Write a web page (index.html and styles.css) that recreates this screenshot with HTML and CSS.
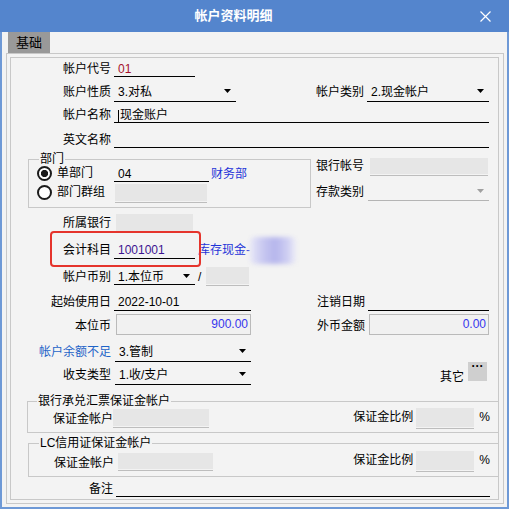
FILE: index.html
```html
<!DOCTYPE html>
<html lang="zh-CN">
<head>
<meta charset="UTF-8">
<title>帐户资料明细</title>
<link rel="stylesheet" href="styles.css">
</head>
<body>

<div class="window">
    <div class="titlebar">
        <div class="title">帐户资料明细</div>
        <div class="close">
            <svg width="11" height="11" viewBox="0 0 11 11"><path d="M0.5 0.5L10.5 10.5M10.5 0.5L0.5 10.5" stroke="#fff" stroke-width="1.2" fill="none"/></svg>
        </div>
    </div>

    <div class="client">
        <div class="tabs"><div class="tab">基础</div></div>

        <div class="panel">
            <div class="frame">

                <div class="row h19">
                    <div class="lbl">帐户代号</div>
                    <div class="fld w81 code">01</div>
                </div>

                <div class="row h25 rp2">
                    <div class="lbl">账户性质</div>
                    <div class="fld w122">3.对私<svg class="arr" width="7" height="4" viewBox="0 0 7 4"><path d="M0 0H7L3.5 4Z"/></svg></div>
                    <div class="lbl w128">帐户类别</div>
                    <div class="fld w122">2.现金帐户<svg class="arr" width="7" height="4" viewBox="0 0 7 4"><path d="M0 0H7L3.5 4Z"/></svg></div>
                </div>

                <div class="row h21">
                    <div class="lbl">帐户名称</div>
                    <div class="fld w375"><span class="caret"></span>现金账户</div>
                </div>

                <div class="row h25">
                    <div class="lbl">英文名称</div>
                    <div class="fld w375"></div>
                </div>

                <div class="dept">
                    <fieldset class="grp g-dept">
                        <legend>部门</legend>
                        <div class="row h16">
                            <div class="opt"><span class="radio on"></span>单部门</div>
                            <div class="fld w95">04</div>
                            <div class="txt link ml2">财务部</div>
                        </div>
                        <div class="row h19">
                            <div class="opt"><span class="radio"></span>部门群组</div>
                            <div class="box gray w92 h17 ml4"></div>
                        </div>
                    </fieldset>
                    <div class="side">
                        <div class="row h16">
                            <div class="lbl w53">银行帐号</div>
                            <div class="box gray w118 h16 ml6"></div>
                        </div>
                        <div class="row h27 rp1">
                            <div class="lbl w53">存款类别</div>
                            <div class="fld dis w121 ml4"><svg class="arr" width="7" height="4" viewBox="0 0 7 4"><path d="M0 0H7L3.5 4Z"/></svg></div>
                        </div>
                    </div>
                </div>

                <div class="row h23">
                    <div class="lbl">所属银行</div>
                    <div class="box flat w77 h17 ml5"></div>
                </div>

                <div class="row h28 rp1">
                    <div class="lbl">会计科目</div>
                    <div class="fld w81 subject">1001001</div>
                    <div class="txt link ml3">库存现金-</div>
                    <div class="smudge"></div>
                </div>

                <div class="row h26">
                    <div class="lbl">帐户币别</div>
                    <div class="fld w81">1.本位币<svg class="arr" width="7" height="4" viewBox="0 0 7 4"><path d="M0 0H7L3.5 4Z"/></svg></div>
                    <div class="txt ml3">/</div>
                    <div class="box gray w43 h17 ml5 mb1"></div>
                </div>

                <div class="row h26 rp1">
                    <div class="lbl">起始使用日</div>
                    <div class="fld w137">2022-10-01</div>
                    <div class="lbl w114">注销日期</div>
                    <div class="fld w121"></div>
                </div>

                <div class="row h24 rp1">
                    <div class="lbl">本位币</div>
                    <div class="box num w135 h21 ml5">900.00</div>
                    <div class="lbl w114">外币金额</div>
                    <div class="box num w120 h21 ml4">0.00</div>
                </div>

                <div class="row h27 rp2">
                    <div class="lbl warn">帐户余额不足</div>
                    <div class="fld w136 ml4">3.管制<svg class="arr" width="7" height="4" viewBox="0 0 7 4"><path d="M0 0H7L3.5 4Z"/></svg></div>
                </div>

                <div class="row h23 rp2 pr11">
                    <div class="lbl">收支类型</div>
                    <div class="fld w136 ml4">1.收/支户<svg class="arr" width="7" height="4" viewBox="0 0 7 4"><path d="M0 0H7L3.5 4Z"/></svg></div>
                    <div class="txt p0 mla">其它</div>
                    <div class="dots">···</div>
                </div>

                <fieldset class="grp g-bank">
                    <legend>银行承兑汇票保证金帐户</legend>
                    <div class="row h19 pr8">
                        <div class="lbl w85">保证金帐户</div>
                        <div class="box gray w96 h17 mb1"></div>
                        <div class="txt p2 mla">保证金比例</div>
                        <div class="box gray w58 h19 ml3"></div>
                        <div class="txt p2 ml5">%</div>
                    </div>
                </fieldset>

                <fieldset class="grp g-lc">
                    <legend>LC信用证保证金帐户</legend>
                    <div class="row h21 pr8">
                        <div class="lbl w85">保证金帐户</div>
                        <div class="box gray w95 h16 ml4 mb2"></div>
                        <div class="txt p3 mla">保证金比例</div>
                        <div class="box gray w58 h19 ml3 mb1"></div>
                        <div class="txt p3 ml5">%</div>
                    </div>
                </fieldset>

                <div class="row h20">
                    <div class="lbl w102">备注</div>
                    <div class="fld w374"></div>
                </div>

                <!-- red annotation around the subject row -->
                <div class="mark"></div>
            </div>
        </div>
    </div>
</div>

</body>
</html>
```

FILE: styles.css
```css
html, body {
    margin: 0;
    padding: 0;
}
body {
    font-family: "Liberation Sans", "Noto Sans CJK SC", sans-serif;
    font-size: 12px;
    color: #000;
    background: #f3f3f3;
}
.window {
    width: 509px;
    height: 509px;
}

/* title bar */
.titlebar {
    display: flex;
    height: 32px;
    background: #5485cd;
    color: #fff;
}
.title {
    flex: 1;
    text-align: center;
    font-size: 13px;
    font-weight: bold;
    line-height: 31px;
}
.close {
    width: 42px;
    box-sizing: border-box;
    padding-left: 13px;
    display: flex;
    align-items: center;
}

/* window body */
.client {
    height: 477px;
    box-sizing: border-box;
    border: 2px solid #6e99d6;
    border-top: 0;
    background: #f3f3f3;
}
.tabs {
    height: 21px;
    display: flex;
}
.tab {
    margin-left: 6px;
    width: 42px;
    background: #999;
    text-align: center;
    line-height: 21px;
    font-size: 13px;
}
.panel {
    margin-left: 4px;
    width: 498px;
    height: 451px;
    box-sizing: border-box;
    border: 1px solid #c8c8c8;
    padding: 3px 4px 3px 3px;
}
.frame {
    position: relative;
    height: 100%;
    box-sizing: border-box;
    border: 1px solid #c8c8c8;
}

/* rows */
.row {
    display: flex;
    align-items: flex-end;
}
.h16 { height: 16px; }
.h19 { height: 19px; }
.h20 { height: 20px; }
.h21 { height: 21px; }
.h23 { height: 23px; }
.h24 { height: 24px; }
.h25 { height: 25px; }
.h26 { height: 26px; }
.h27 { height: 27px; }
.h28 { height: 28px; }
.pr8 { padding-right: 8px; }
.pr11 { padding-right: 11px; }

.lbl, .txt, .fld, .opt {
    flex: none;
    line-height: 13px;
    min-height: 13px;
    border-bottom: 1px solid transparent;
    white-space: nowrap;
}
.lbl {
    width: 100px;
    text-align: right;
}
.fld {
    display: flex;
    align-items: flex-end;
    margin-left: 3px;
    padding-left: 4px;
    box-sizing: border-box;
    border-bottom-color: #000;
}
.fld.dis {
    border-bottom-color: #b4b4b4;
}
.fld.dis .arr {
    fill: #a0a0a0;
}
.arr {
    flex: none;
    margin-left: auto;
    margin-right: 5px;
    margin-bottom: 6px;
}
.caret {
    width: 1px;
    height: 12px;
    background: #000;
    margin-right: 1px;
    align-self: flex-end;
}

.rp1 > * { padding-bottom: 1px; }
.rp2 > * { padding-bottom: 2px; }
.p0 { padding-bottom: 0; }
.p2 { padding-bottom: 2px; }
.p3 { padding-bottom: 3px; }

/* widths */
.w43 { width: 43px; }
.w53 { width: 53px; }
.w58 { width: 58px; }
.w77 { width: 77px; }
.w81 { width: 81px; }
.w85 { width: 85px; }
.w92 { width: 92px; }
.w95 { width: 95px; }
.w96 { width: 96px; }
.w102 { width: 102px; }
.w114 { width: 114px; }
.w118 { width: 118px; }
.w120 { width: 120px; }
.w121 { width: 121px; }
.w122 { width: 122px; }
.w128 { width: 128px; }
.w135 { width: 135px; }
.w136 { width: 136px; }
.w137 { width: 137px; }
.w374 { width: 374px; }
.w375 { width: 375px; }

.ml2 { margin-left: 2px; }
.ml3 { margin-left: 3px; }
.ml4 { margin-left: 4px; }
.ml5 { margin-left: 5px; }
.ml6 { margin-left: 6px; }
.mla { margin-left: auto; }
.mb1 { margin-bottom: 1px; }
.mb2 { margin-bottom: 2px; }

/* boxes */
.box {
    flex: none;
    box-sizing: border-box;
}
.h16.box { height: 16px; }
.h17 { height: 17px; }
.h19.box { height: 19px; }
.h21.box { height: 21px; }
.gray {
    background: #e6e6e6;
    box-shadow: 0 1px 0 #f3f3f3, 0 2px 0 #bdbdbd;
}
.flat {
    background: #e6e6e6;
}
.num {
    display: flex;
    align-items: center;
    justify-content: flex-end;
    padding-right: 2px;
    border: 1px solid #bababa;
    background: #f1f1f1;
    color: #3535ee;
    line-height: 13px;
}

/* colours */
.code { color: #a5122c; }
.subject { color: #3d1491; }
.link { color: #1f34d8; }
.warn { color: #1e64c8; }

/* group boxes */
.grp {
    margin: 0;
    padding: 0;
    min-width: 0;
    box-sizing: border-box;
    border: 1px solid #c8c8c8;
}
.grp legend {
    padding: 0 1px;
    line-height: 13px;
}
.dept {
    display: flex;
    align-items: flex-start;
    height: 60px;
}
.g-dept {
    margin: 5px 0 0 17px;
    width: 283px;
    height: 55px;
}
.g-dept legend { margin-left: 10px; }
.side {
    display: flex;
    flex-direction: column;
    margin-top: 10px;
}
.opt {
    width: 82px;
    box-sizing: border-box;
    padding-left: 8px;
    display: flex;
    align-items: center;
    gap: 5px;
}
.radio {
    width: 15px;
    height: 15px;
    box-sizing: border-box;
    border: 2px solid #1b1b1b;
    border-radius: 50%;
    background: #fff;
}
.radio.on {
    background: radial-gradient(circle, #1b1b1b 0 3.3px, #fff 3.9px);
}
.g-bank {
    margin: 10px 0 0 16px;
    width: 471px;
    height: 38px;
    border-right: 0;
}
.g-bank legend { margin-left: 9px; }
.g-lc {
    margin: 4px 0 0 17px;
    width: 470px;
    height: 40px;
    border-right: 0;
}
.g-lc legend { margin-left: 10px; }

/* odds and ends */
.smudge {
    flex: none;
    width: 46px;
    height: 26px;
    margin-bottom: -5px;
    border-radius: 5px;
    background: linear-gradient(90deg, #e8e8f7, #c6c6f0 30%, #b6b6ec 55%, #cdcdf2 80%, #ededf6);
    filter: blur(2px);
}
.dots {
    flex: none;
    width: 19px;
    height: 19px;
    margin-left: 4px;
    margin-bottom: 4px;
    background: #cfcfcf;
    text-align: center;
    line-height: 9px;
    font-weight: bold;
    padding-bottom: 0;
}
.mark {
    position: absolute;
    left: 39px;
    top: 173px;
    width: 151px;
    height: 36px;
    box-sizing: border-box;
    border: 2px solid #e5342c;
    border-radius: 4px;
}
```
